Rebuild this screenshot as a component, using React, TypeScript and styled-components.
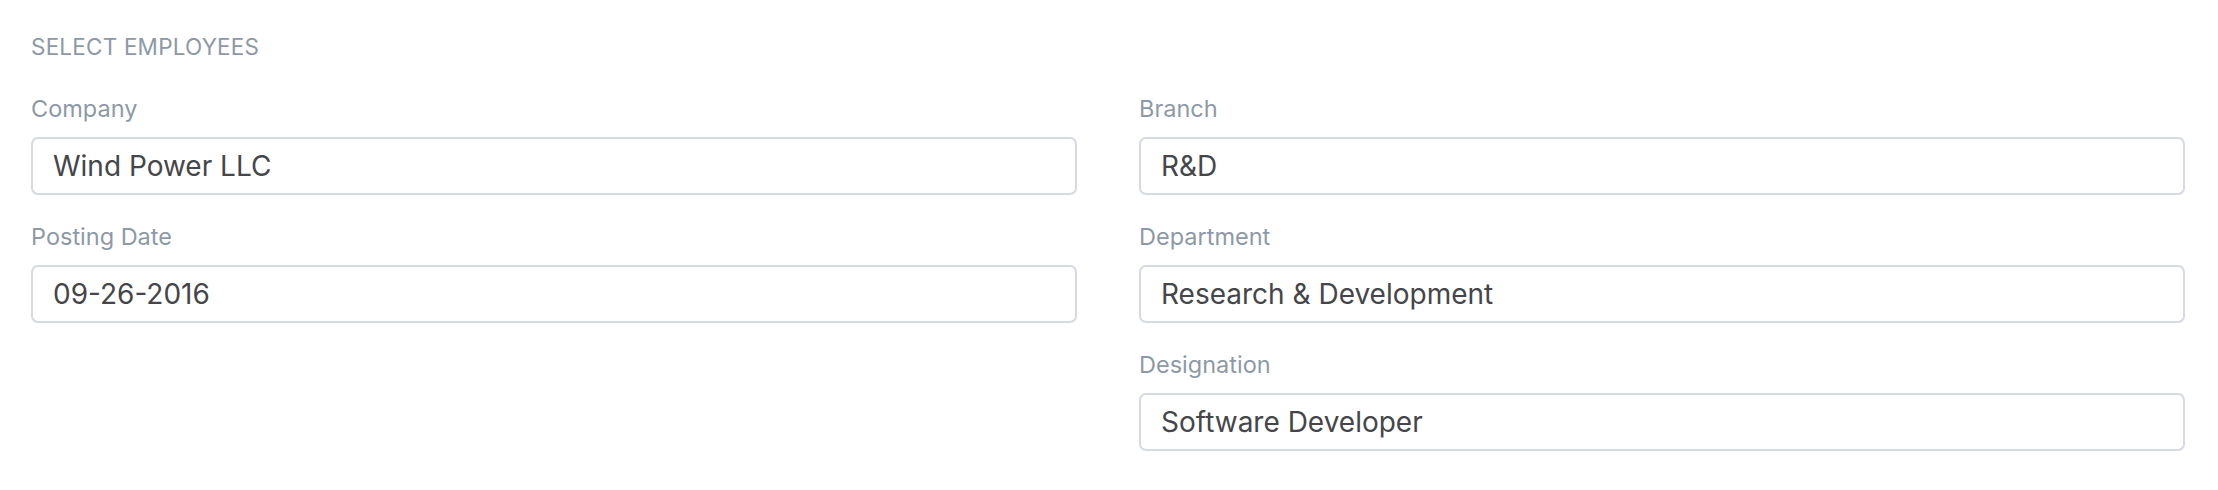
import styled, { createGlobalStyle } from "styled-components";

const GlobalStyle = createGlobalStyle`
  body {
    margin: 0;
    background: #fff;
    font-family: Inter, "Liberation Sans", sans-serif;
  }
`;

const Section = styled.section`
  padding: 31px 33px 0 31px;
`;

const SectionHead = styled.div`
  font-size: 22.5px;
  line-height: 31px;
  color: #8d99a6;
  text-transform: uppercase;
  letter-spacing: 0.2px;
  margin-bottom: 32px;
`;

const Columns = styled.div`
  display: grid;
  grid-template-columns: 1fr 1fr;
  column-gap: 62px;
`;

const Column = styled.div`
  display: flex;
  flex-direction: column;
`;

const Field = styled.div`
  margin-bottom: 27px;
`;

const Label = styled.div`
  font-size: 23.5px;
  line-height: 30px;
  color: #8d99a6;
  margin-bottom: 13px;
`;

const Input = styled.div`
  box-sizing: border-box;
  height: 58px;
  display: flex;
  align-items: center;
  padding: 0 20px;
  border: 2px solid #d4dadf;
  border-radius: 7px;
  font-size: 28px;
  color: #444649;
`;

const left = [
  { label: "Company", value: "Wind Power LLC" },
  { label: "Posting Date", value: "09-26-2016" },
];

const right = [
  { label: "Branch", value: "R&D" },
  { label: "Department", value: "Research & Development" },
  { label: "Designation", value: "Software Developer" },
];

function FieldList({ fields }: { fields: { label: string; value: string }[] }) {
  return (
    <Column>
      {fields.map((f) => (
        <Field key={f.label}>
          <Label>{f.label}</Label>
          <Input>{f.value}</Input>
        </Field>
      ))}
    </Column>
  );
}

export default function App() {
  return (
    <>
      <GlobalStyle />
      <Section>
        <SectionHead>Select Employees</SectionHead>
        <Columns>
          <FieldList fields={left} />
          <FieldList fields={right} />
        </Columns>
      </Section>
    </>
  );
}
